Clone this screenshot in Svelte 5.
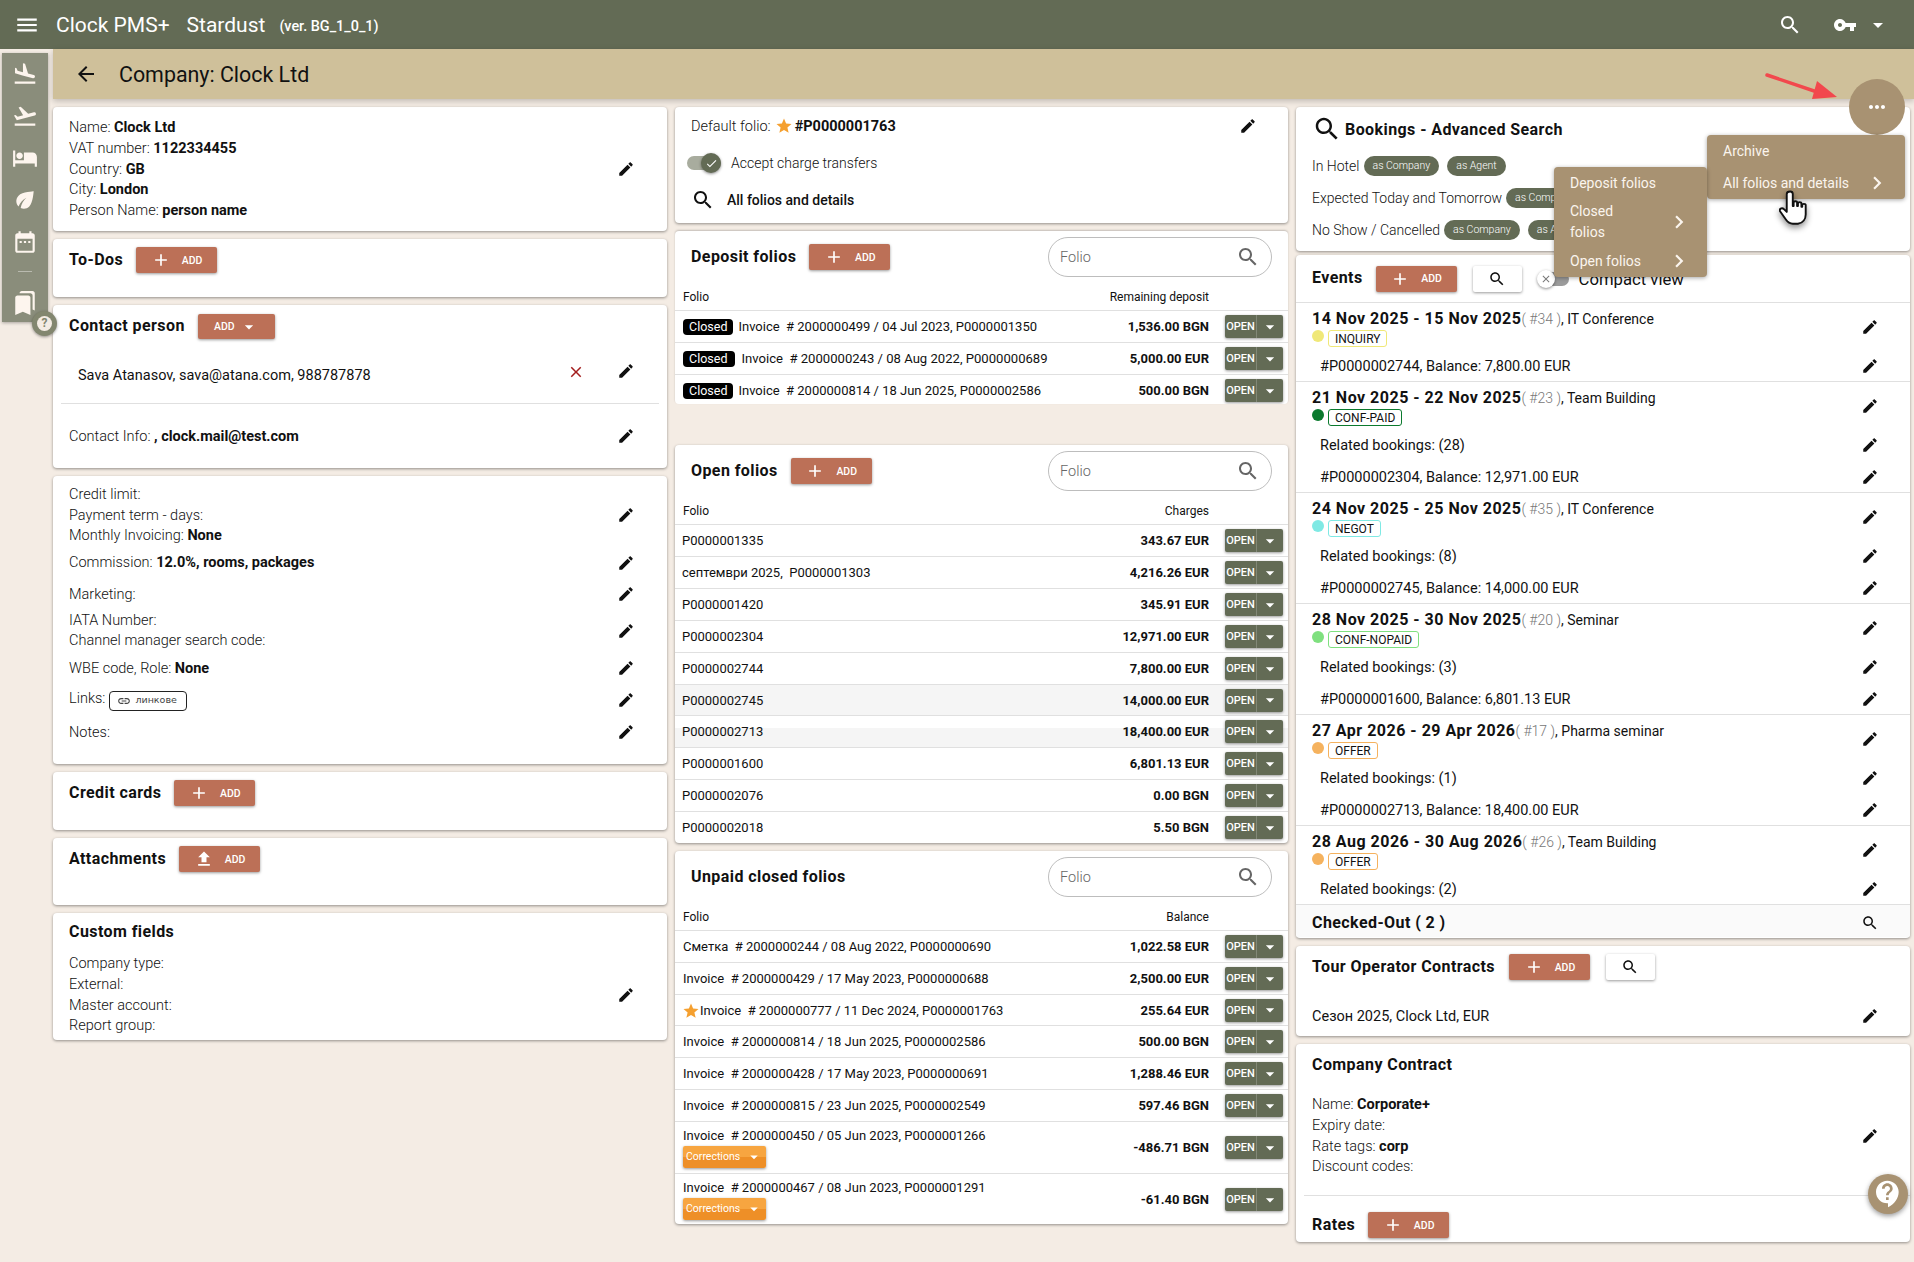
<script>
  const I = {
    land: "M2.5 19h19v2h-19zm7.18-5.73l4.35 1.16 5.31 1.42c.8.21 1.62-.26 1.84-1.06.21-.8-.26-1.62-1.06-1.84l-5.31-1.42-2.76-9.02L10.12 2v8.28L5.15 8.95l-.93-2.32-1.45-.39v5.17l1.6.43 5.31 1.43z",
    takeoff: "M2.5 19h19v2h-19zm19.57-9.36c-.21-.8-1.04-1.28-1.84-1.06L14.92 10l-6.9-6.43-1.93.51 4.14 7.17-4.97 1.33-1.97-1.54-1.45.39 1.82 3.16.77 1.33 1.6-.43 5.31-1.42 4.35-1.16L21 11.49c.81-.23 1.28-1.05 1.07-1.85z",
    hotel: "M7 13c1.66 0 3-1.34 3-3S8.66 7 7 7s-3 1.34-3 3 1.34 3 3 3zm12-6h-8v7H3V5H1v15h2v-3h18v3h2v-9c0-2.21-1.79-4-4-4z",
    eco: "M6.05 8.05c-2.73 2.73-2.73 7.15-.02 9.88 1.47-3.4 4.09-6.24 7.36-7.93-2.77 2.34-4.71 5.61-5.39 9.32 2.6 1.23 5.8.78 7.95-1.37C19.43 14.47 20 4 20 4S9.53 4.57 6.05 8.05z",
    date: "M9 11H7v2h2v-2zm4 0h-2v2h2v-2zm4 0h-2v2h2v-2zm2-7h-1V2h-2v2H8V2H6v2H5c-1.11 0-1.99.9-1.99 2L3 20c0 1.1.89 2 2 2h14c1.1 0 2-.9 2-2V6c0-1.1-.9-2-2-2zm0 16H5V9h14v11z",
    marks: "M19 18l2 1V3c0-1.1-.9-2-2-2H8.99C7.89 1 7 1.9 7 3h10c1.1 0 2 .9 2 2v13zM15 5H5c-1.1 0-2 .9-2 2v16l7-3 7 3V7c0-1.1-.9-2-2-2z",
    search: "M15.5 14h-.79l-.28-.27C15.41 12.59 16 11.11 16 9.5 16 5.91 13.09 3 9.5 3S3 5.91 3 9.5 5.91 16 9.5 16c1.61 0 3.09-.59 4.23-1.57l.27.28v.79l5 4.99L20.49 19l-4.99-5zm-6 0C7.01 14 5 11.99 5 9.5S7.01 5 9.5 5 14 7.01 14 9.5 11.99 14 9.5 14z",
    edit: "M3 17.25V21h3.75L17.81 9.94l-3.75-3.75L3 17.25zM20.71 7.04c.39-.39.39-1.02 0-1.41l-2.34-2.34c-.39-.39-1.02-.39-1.41 0l-1.83 1.83 3.75 3.75 1.83-1.83z",
    menu: "M3 18h18v-2H3v2zm0-5h18v-2H3v2zm0-7v2h18V6H3z",
    back: "M20 11H7.83l5.59-5.59L12 4l-8 8 8 8 1.41-1.41L7.83 13H20v-2z",
    key: "M12.65 10C11.83 7.67 9.61 6 7 6c-3.31 0-6 2.69-6 6s2.69 6 6 6c2.61 0 4.83-1.67 5.65-4H17v4h4v-4h2v-4H12.65zM7 14c-1.1 0-2-.9-2-2s.9-2 2-2 2 .9 2 2-.9 2-2 2z",
    add: "M19 13h-6v6h-2v-6H5v-2h6V5h2v6h6v2z",
    close: "M19 6.41L17.59 5 12 10.59 6.41 5 5 6.41 10.59 12 5 17.59 6.41 19 12 13.41 17.59 19 19 17.59 13.41 12z",
    chev: "M10 6L8.59 7.41 13.17 12l-4.58 4.59L10 18l6-6z",
    drop: "M7 10l5 5 5-5z",
    star: "M12 17.27L18.18 21l-1.64-7.03L22 9.24l-7.19-.61L12 2 9.19 8.63 2 9.24l5.46 4.73L5.82 21z",
    more: "M6 10c-1.1 0-2 .9-2 2s.9 2 2 2 2-.9 2-2-.9-2-2-2zm12 0c-1.1 0-2 .9-2 2s.9 2 2 2 2-.9 2-2-.9-2-2-2zm-6 0c-1.1 0-2 .9-2 2s.9 2 2 2 2-.9 2-2-.9-2-2-2z",
    upload: "M9 16h6v-6h4l-7-7-7 7h4zm-4 2h14v2H5z",
    link: "M3.9 12c0-1.71 1.39-3.1 3.1-3.1h4V7H7c-2.76 0-5 2.24-5 5s2.24 5 5 5h4v-1.9H7c-1.71 0-3.1-1.39-3.1-3.1zM8 13h8v-2H8v2zm9-6h-4v1.9h4c1.71 0 3.1 1.39 3.1 3.1s-1.39 3.1-3.1 3.1h-4V17h4c2.76 0 5-2.24 5-5s-2.24-5-5-5z",
    check: "M9 16.17L4.83 12l-1.42 1.41L9 19 21 7l-1.41-1.41z",
    support: "M11.5 2C6.81 2 3 5.81 3 10.5S6.81 19 11.5 19h.5v3c4.86-2.34 8-7 8-11.5C20 5.81 16.19 2 11.5 2zm1 14.5h-2v-2h2v2zm0-3.5h-2c0-3.25 3-3 3-5 0-1.1-.9-2-2-2s-2 .9-2 2h-2c0-2.21 1.79-4 4-4s4 1.79 4 4c0 2.5-3 2.75-3 5z"
  };

  const deposit = [
    ["Invoice  # 2000000499 / 04 Jul 2023, P0000001350", "1,536.00 BGN"],
    ["Invoice  # 2000000243 / 08 Aug 2022, P0000000689", "5,000.00 EUR", "wide"],
    ["Invoice  # 2000000814 / 18 Jun 2025, P0000002586", "500.00 BGN"]
  ];
  const open = [
    ["P0000001335", "343.67 EUR"],
    ["септември 2025,  P0000001303", "4,216.26 EUR"],
    ["P0000001420", "345.91 EUR"],
    ["P0000002304", "12,971.00 EUR"],
    ["P0000002744", "7,800.00 EUR"],
    ["P0000002745", "14,000.00 EUR", "hover"],
    ["P0000002713", "18,400.00 EUR", "half"],
    ["P0000001600", "6,801.13 EUR"],
    ["P0000002076", "0.00 BGN"],
    ["P0000002018", "5.50 BGN"]
  ];
  const unpaid = [
    ["Сметка  # 2000000244 / 08 Aug 2022, P0000000690", "1,022.58 EUR"],
    ["Invoice  # 2000000429 / 17 May 2023, P0000000688", "2,500.00 EUR"],
    ["Invoice  # 2000000777 / 11 Dec 2024, P0000001763", "255.64 EUR", "star"],
    ["Invoice  # 2000000814 / 18 Jun 2025, P0000002586", "500.00 BGN"],
    ["Invoice  # 2000000428 / 17 May 2023, P0000000691", "1,288.46 EUR"],
    ["Invoice  # 2000000815 / 23 Jun 2025, P0000002549", "597.46 BGN"],
    ["Invoice  # 2000000450 / 05 Jun 2023, P0000001266", "-486.71 BGN", "corr"],
    ["Invoice  # 2000000467 / 08 Jun 2023, P0000001291", "-61.40 BGN", "corr"]
  ];
  const events = [
    { d: "14 Nov 2025 - 15 Nov 2025", n: "#34", t: "IT Conference", s: "INQUIRY", c: "#f0e878", rel: null, f: "#P0000002744, Balance: 7,800.00 EUR" },
    { d: "21 Nov 2025 - 22 Nov 2025", n: "#23", t: "Team Building", s: "CONF-PAID", c: "#0b7a2e", rel: 28, f: "#P0000002304, Balance: 12,971.00 EUR" },
    { d: "24 Nov 2025 - 25 Nov 2025", n: "#35", t: "IT Conference", s: "NEGOT", c: "#7fe9e4", rel: 8, f: "#P0000002745, Balance: 14,000.00 EUR" },
    { d: "28 Nov 2025 - 30 Nov 2025", n: "#20", t: "Seminar", s: "CONF-NOPAID", c: "#7fe07f", rel: 3, f: "#P0000001600, Balance: 6,801.13 EUR" },
    { d: "27 Apr 2026 - 29 Apr 2026", n: "#17", t: "Pharma seminar", s: "OFFER", c: "#f5b25e", rel: 1, f: "#P0000002713, Balance: 18,400.00 EUR" },
    { d: "28 Aug 2026 - 30 Aug 2026", n: "#26", t: "Team Building", s: "OFFER", c: "#f5b25e", rel: 2, f: null }
  ];
</script>

{#snippet ic(d, size = 18)}
  <svg class="ic" width={size} height={size} viewBox="0 0 24 24" fill="currentColor"><path {d} /></svg>
{/snippet}

{#snippet addBtn()}
  <button class="btn add">{@render ic(I.add, 20)}<span>ADD</span></button>
{/snippet}

{#snippet searchBox()}
  <div class="searchbox"><span>Folio</span>{@render ic(I.search, 24)}</div>
{/snippet}

{#snippet openBtn()}
  <div class="open"><span class="o">OPEN</span><span class="c">{@render ic(I.drop, 20)}</span></div>
{/snippet}

{#snippet chip(label)}
  <span class="chip">{label}</span>
{/snippet}

<div class="app">
  <header class="top">
    <span class="burger">{@render ic(I.menu, 26)}</span>
    <span class="brand">Clock PMS+</span>
    <span class="brand b2">Stardust</span>
    <span class="ver">(ver. BG_1_0_1)</span>
    <span class="spacer"></span>
    <span class="t-search">{@render ic(I.search, 24)}</span>
    <span class="t-key">{@render ic(I.key, 24)}</span>
    <span class="t-drop">{@render ic(I.drop, 24)}</span>
  </header>

  <div class="shell">
    <div class="sub">
      <span class="backic">{@render ic(I.back, 24)}</span>
      <h1>Company: Clock Ltd</h1>
    </div>

    <main class="cols">
      <section class="col">
        <div class="card c1 rowcard">
          <div class="lines">
            <div>Name: <b>Clock Ltd</b></div>
            <div>VAT number: <b>1122334455</b></div>
            <div>Country: <b>GB</b></div>
            <div>City: <b>London</b></div>
            <div>Person Name: <b>person name</b></div>
          </div>
          <span class="pen">{@render ic(I.edit)}</span>
        </div>

        <div class="card c2">
          <div class="head"><h2>To-Dos</h2>{@render addBtn()}</div>
        </div>

        <div class="card c3">
          <div class="head contact-head">
            <h2>Contact person</h2>
            <button class="btn add addmenu"><span>ADD</span>{@render ic(I.drop, 20)}</button>
          </div>
          <div class="contact-row">
            <span class="sava">Sava Atanasov, sava@atana.com, 988787878</span>
            <span class="x">{@render ic(I.close, 18)}</span>
            <span class="pen">{@render ic(I.edit)}</span>
          </div>
          <div class="contact-info">
            <span class="light">Contact Info: <b>, clock.mail@test.com</b></span>
            <span class="pen">{@render ic(I.edit)}</span>
          </div>
        </div>

        <div class="card c4">
          <div class="seg s1">
            <div class="lines">
              <div>Credit limit:</div>
              <div>Payment term - days:</div>
              <div>Monthly Invoicing: <b>None</b></div>
            </div>
            <span class="pen">{@render ic(I.edit)}</span>
          </div>
          <div class="seg s2"><div class="lines"><div>Commission: <b>12.0%, rooms, packages</b></div></div><span class="pen">{@render ic(I.edit)}</span></div>
          <div class="seg s3"><div class="lines"><div>Marketing:</div></div><span class="pen">{@render ic(I.edit)}</span></div>
          <div class="seg s4">
            <div class="lines tight"><div>IATA Number:</div><div>Channel manager search code:</div></div>
            <span class="pen">{@render ic(I.edit)}</span>
          </div>
          <div class="seg s5"><div class="lines"><div>WBE code, Role: <b>None</b></div></div><span class="pen">{@render ic(I.edit)}</span></div>
          <div class="seg s6">
            <div class="lines links"><span>Links:</span><span class="linkchip">{@render ic(I.link, 14)}<i>линкове</i></span></div>
            <span class="pen">{@render ic(I.edit)}</span>
          </div>
          <div class="seg s7"><div class="lines"><div>Notes:</div></div><span class="pen">{@render ic(I.edit)}</span></div>
        </div>

        <div class="card c5">
          <div class="head"><h2>Credit cards</h2>{@render addBtn()}</div>
        </div>

        <div class="card c6">
          <div class="head">
            <h2>Attachments</h2>
            <button class="btn add">{@render ic(I.upload, 20)}<span>ADD</span></button>
          </div>
        </div>

        <div class="card c7">
          <h2 class="custom-title">Custom fields</h2>
          <div class="rowcard custom-body">
            <div class="lines">
              <div>Company type:</div>
              <div>External:</div>
              <div>Master account:</div>
              <div>Report group:</div>
            </div>
            <span class="pen">{@render ic(I.edit)}</span>
          </div>
        </div>
      </section>

      <section class="col">
        <div class="card m1">
          <div class="def">
            <span class="light">Default folio:</span>
            <span class="star">{@render ic(I.star, 18)}</span>
            <b>#P0000001763</b>
            <span class="spacer"></span>
            <span class="pen">{@render ic(I.edit)}</span>
          </div>
          <div class="accept">
            <span class="tgl"><span class="knob">{@render ic(I.check, 13)}</span></span>
            <span class="light">Accept charge transfers</span>
          </div>
          <div class="allf">
            {@render ic(I.search, 24)}
            <b>All folios and details</b>
          </div>
        </div>

        <div class="card m2">
          <div class="thead">
            <h2>Deposit folios</h2>{@render addBtn()}<span class="spacer"></span>{@render searchBox()}
          </div>
          <div class="tcols"><span>Folio</span><span>Remaining deposit</span></div>
          {#each deposit as r}
            <div class="tr">
              <span class="closed" class:wide={r[2] === "wide"}>Closed</span>
              <span class="tx" class:widetx={r[2] === "wide"}>{r[0]}</span>
              <span class="spacer"></span>
              <b class="amt">{r[1]}</b>
              {@render openBtn()}
            </div>
          {/each}
        </div>

        <div class="card m3">
          <div class="thead">
            <h2>Open folios</h2>{@render addBtn()}<span class="spacer"></span>{@render searchBox()}
          </div>
          <div class="tcols"><span>Folio</span><span>Charges</span></div>
          {#each open as r}
            <div class="tr" class:hover={r[2] === "hover"} class:half={r[2] === "half"}>
              <span class="tx">{r[0]}</span>
              <span class="spacer"></span>
              <b class="amt">{r[1]}</b>
              {@render openBtn()}
            </div>
          {/each}
        </div>

        <div class="card m4">
          <div class="thead">
            <h2>Unpaid closed folios</h2><span class="spacer"></span>{@render searchBox()}
          </div>
          <div class="tcols"><span>Folio</span><span>Balance</span></div>
          {#each unpaid as r}
            <div class="tr" class:tall={r[2] === "corr"} class:starrow={r[2] === "star"}>
              {#if r[2] === "star"}<span class="star rowstar">{@render ic(I.star, 18)}</span>{/if}
              <div class="txwrap">
                <span class="tx">{r[0]}</span>
                {#if r[2] === "corr"}
                  <span class="corr"><span>Corrections</span>{@render ic(I.drop, 18)}</span>
                {/if}
              </div>
              <span class="spacer"></span>
              <b class="amt">{r[1]}</b>
              {@render openBtn()}
            </div>
          {/each}
        </div>
      </section>

      <section class="col">
        <div class="card r1">
          <div class="adv">
            {@render ic(I.search, 30)}
            <h2>Bookings - Advanced Search</h2>
          </div>
          <div class="advrow"><span class="light">In Hotel</span>{@render chip("as Company")}{@render chip("as Agent")}</div>
          <div class="advrow"><span class="light">Expected Today and Tomorrow</span>{@render chip("as Company")}{@render chip("as Agent")}</div>
          <div class="advrow"><span class="light">No Show / Cancelled</span>{@render chip("as Company")}{@render chip("as Agent")}</div>
        </div>

        <div class="card r2">
          <div class="ev-head">
            <h2>Events</h2>
            {@render addBtn()}
            <button class="btn white">{@render ic(I.search, 18)}</button>
            <span class="tgl off"><span class="knob">{@render ic(I.close, 12)}</span></span>
            <span class="compact">Compact view</span>
          </div>
          {#each events as e, i}
            <div class="ev" class:first={i === 0} class:last={i === events.length - 1}>
              <div class="ev-main">
                <div class="ev-text">
                  <div class="ev-title"><b>{e.d}</b><span class="gray">( {e.n} )</span><span>, {e.t}</span></div>
                  <div class="ev-status">
                    <span class="dot" style="background:{e.c}"></span>
                    <span class="status" style="border-color:{e.c}">{e.s}</span>
                  </div>
                </div>
                <span class="pen">{@render ic(I.edit)}</span>
              </div>
              {#if e.rel !== null}
                <div class="ev-sub"><span>Related bookings: ({e.rel})</span><span class="pen">{@render ic(I.edit)}</span></div>
              {/if}
              {#if e.f}
                <div class="ev-sub"><span>{e.f}</span><span class="pen">{@render ic(I.edit)}</span></div>
              {/if}
            </div>
          {/each}
          <div class="checked">
            <h2>Checked-Out ( 2 )</h2>
            <span class="pen">{@render ic(I.search, 18)}</span>
          </div>
        </div>

        <div class="card r3">
          <div class="tour-head">
            <h2>Tour Operator Contracts</h2>
            {@render addBtn()}
            <button class="btn white">{@render ic(I.search, 18)}</button>
          </div>
          <div class="tour-row"><span>Сезон 2025, Clock Ltd, EUR</span><span class="pen">{@render ic(I.edit)}</span></div>
        </div>

        <div class="card r4">
          <h2 class="contract-title">Company Contract</h2>
          <div class="rowcard contract-body">
            <div class="lines">
              <div>Name: <b>Corporate+</b></div>
              <div>Expiry date:</div>
              <div>Rate tags: <b>corp</b></div>
              <div>Discount codes:</div>
            </div>
            <span class="pen">{@render ic(I.edit)}</span>
          </div>
          <div class="rates"><h2>Rates</h2>{@render addBtn()}</div>
        </div>
      </section>
    </main>
  </div>

  <aside class="side">
    <span>{@render ic(I.land, 26)}</span>
    <span>{@render ic(I.takeoff, 26)}</span>
    <span>{@render ic(I.hotel, 26)}</span>
    <span>{@render ic(I.eco, 26)}</span>
    <span>{@render ic(I.date, 26)}</span>
    <em></em>
    <span>{@render ic(I.marks, 26)}</span>
  </aside>
  <div class="sidehelp"><span>?</span></div>

  <svg class="arrow" width="76" height="32" viewBox="0 0 76 32"><path d="M2 3 L58 22" stroke="#f2484d" stroke-width="3.5" stroke-linecap="round"/><path d="M52 9 L72 25 L47 27 Z" fill="#f2484d"/></svg>
  <button class="fab">{@render ic(I.more, 24)}</button>

  <nav class="menu main-menu">
    <div class="mi">Archive</div>
    <div class="mi">All folios and details {@render ic(I.chev, 26)}</div>
  </nav>
  <nav class="menu sub-menu">
    <div class="mi">Deposit folios</div>
    <div class="mi two"><span>Closed<br />folios</span>{@render ic(I.chev, 26)}</div>
    <div class="mi">Open folios {@render ic(I.chev, 26)}</div>
  </nav>

  <svg class="hand" width="31" height="39" viewBox="0 0 36 46" preserveAspectRatio="none">
    <path d="M13 3c2 0 3 1 3 3v14l1 0v-4c0-2 4-2 4 0v4h1v-3c0-2 4-2 4 0v4h1v-2c0-2 4-2 4 0v11c0 5-3 10-9 11h-6c-4 0-6-2-8-5l-7-10c-1-2 2-5 5-2l3 3V6c0-2 2-3 4-3z" fill="#fff" stroke="#111" stroke-width="2.2" stroke-linejoin="round"/>
  </svg>

  <button class="helpfab">{@render ic(I.support, 32)}</button>
</div>

<style>
  :global(body) {
    margin: 0;
    background: #f4ece4;
  }
  .app {
    position: relative;
    width: 1914px;
    height: 1262px;
    overflow: hidden;
    background: #f4ece4;
    font-family: Roboto, "Noto Sans", sans-serif;
    font-size: 14px;
    color: #111;
  }
  .ic { display: block; flex: none; }
  .spacer { flex: 1; }
  b { font-weight: 700; }
  h1, h2 { margin: 0; }
  h2 { font-size: 16px; font-weight: 700; line-height: 20px; letter-spacing: .42px; white-space: nowrap; }
  button { font-family: inherit; border: 0; padding: 0; }

  .top {
    height: 49px;
    background: #636b55;
    color: #fff;
    display: flex;
    align-items: center;
    padding-left: 14px;
  }
  .burger { width: 28px; margin-right: 14px; }
  .brand { font-size: 21px; margin-right: 17px; }
  .ver { font-size: 14.4px; font-weight: 500; margin-top: 3px; margin-left: -3px; }
  .t-search { margin-right: 31px; }
  .t-key { margin-right: 9px; }
  .t-drop { margin-right: 24px; }

  .shell { margin-left: 53px; }
  .sub {
    height: 50px;
    background: #cfc09a;
    box-shadow: 0 2px 6px rgba(0,0,0,.22);
    display: flex;
    align-items: center;
    padding-left: 21px;
    position: relative;
    z-index: 1;
  }
  .backic { width: 24px; margin-right: 21px; }
  h1 { font-size: 21.4px; font-weight: 400; }

  .cols {
    display: grid;
    grid-template-columns: 614px 613px 614px;
    gap: 8px;
    padding-top: 8px;
  }
  .col { display: flex; flex-direction: column; gap: 8px; min-width: 0; }
  .card {
    background: #fff;
    border-radius: 4px;
    box-shadow: 0 1px 3px rgba(0,0,0,.4);
    overflow: hidden;
    flex: none;
  }
  .light { font-weight: 300; }
  .lines { font-weight: 300; flex: 1; line-height: 20.8px; font-size: 14.5px; padding-top: 2px; }
  .rowcard { display: flex; align-items: center; padding-left: 16px; }
  .pen { width: 18px; margin-right: 32px; color: #111; flex: none; }

  .head { display: flex; align-items: flex-start; padding: 8px 0 0 16px; gap: 13px; }
  .head h2 { margin-top: 3px; }

  .btn {
    display: inline-flex;
    align-items: center;
    justify-content: center;
    height: 26px;
    border-radius: 2px;
    box-shadow: 0 1px 3px rgba(0,0,0,.4);
    flex: none;
  }
  .add { width: 81px; background: #bc7057; color: #fff; gap: 11px; font-size: 10.5px; font-weight: 500; }
  .addmenu { width: 77px; height: 25px; gap: 4px; }
  .white { width: 49px; background: #fff; color: #111; }

  .c1 { height: 124px; }
  .c2 { height: 58px; }
  .c3 { height: 163px; }
  .contact-head { padding-top: 9px; gap: 13px; }
  .contact-head h2 { margin-top: 2px; }
  .contact-row {
    margin: 0 8px;
    height: 65px;
    padding: 21px 0 0 17px;
    box-sizing: border-box;
    display: flex;
    align-items: flex-start;
    border-bottom: 1px solid #e0e0e0;
    position: relative;
    font-size: 14.5px;
  }
  .contact-row .sava { flex: 1; padding-top: 6px; line-height: 20px; }
  .contact-row .x { color: #a31d1d; margin-right: 32px; margin-top: 3px; }
  .contact-row .pen { margin-right: 24px; margin-top: 2px; }
  .contact-info { display: flex; align-items: center; justify-content: space-between; padding: 23px 0 0 16px; font-size: 14.5px; }

  .c4 { height: 288px; padding-top: 7px; box-sizing: border-box; }
  .seg { display: flex; align-items: center; padding-left: 16px; }
  .s1 { height: 64px; }
  .s2 { height: 31px; }
  .s3 { height: 32px; }
  .s4 { height: 42px; }
  .s5 { height: 32px; }
  .s6 { height: 32px; }
  .s7 { height: 32px; }
  .tight { line-height: 20px; padding-top: 0; }
  .links { display: flex; align-items: center; gap: 4px; padding-top: 0; margin-top: -2px; }
  .linkchip {
    display: inline-flex;
    align-items: center;
    gap: 4px;
    height: 18px;
    padding: 0 9px 0 7px;
    border: 1px solid #222;
    border-radius: 4px;
    font-size: 9.5px;
    font-family: "DejaVu Sans", sans-serif;
    font-weight: 400;
    color: #444;
    margin-top: 3px;
  }
  .linkchip i { font-style: normal; }

  .c5 { height: 58px; }
  .c6 { height: 67px; }
  .c7 { height: 127px; }
  .custom-title { padding: 9px 0 0 16px; }
  .custom-body { margin-top: 10px; }

  .m1 { height: 116px; padding-left: 16px; position: relative; }
  .def { display: flex; align-items: center; height: 20px; margin-top: 9px; gap: 2px; font-size: 14.5px; }
  .def .star { margin-left: 2px; }
  .def .pen { margin-right: 31px; }
  .star { color: #f5a030; }
  .accept { display: flex; align-items: center; height: 20px; margin-top: 17px; gap: 10px; margin-left: -4px; }
  .tgl {
    width: 34px;
    height: 14px;
    border-radius: 7px;
    background: #a8ac9e;
    position: relative;
    display: block;
    flex: none;
  }
  .knob {
    position: absolute;
    right: 0;
    top: -3px;
    width: 20px;
    height: 20px;
    border-radius: 50%;
    background: #636b55;
    color: #fff;
    display: flex;
    align-items: center;
    justify-content: center;
    box-shadow: 0 1px 3px rgba(0,0,0,.45);
  }
  .allf { display: flex; align-items: center; gap: 12px; margin-top: 15px; height: 24px; }
  .allf b { font-weight: 500; }

  .thead { display: flex; align-items: center; height: 40px; padding: 6px 16px 0 16px; gap: 13px; }
  .tcols {
    display: flex;
    justify-content: space-between;
    padding: 6px 79px 0 8px;
    height: 33px;
    align-items: center;
    font-size: 12px;
    font-weight: 400;
    box-sizing: border-box;
  }
  .tr {
    display: flex;
    align-items: center;
    height: 32px;
    box-sizing: border-box;
    border-top: 1px solid #e0e0e0;
    padding: 0 5px 0 8px;
    font-size: 13px;
    font-weight: 400;
  }
  .tr.hover { background: #f5f5f5; height: 31px; }
  .tr.half { background: linear-gradient(#fff 12px, #f5f5f5 12px); }
  .tr.starrow { height: 31px; }
  .tr.tall { height: 52px; }
  .tx { white-space: pre; margin-left: -1px; }
  .tx.widetx { font-size: 13.1px; margin-left: 0; }
  .amt { margin-right: 16px; font-size: 13px; font-weight: 700; }
  .closed {
    background: #000;
    color: #fff;
    border-radius: 4px;
    height: 16px;
    line-height: 16px;
    padding: 0 6px;
    font-size: 12.5px;
    margin-right: 6px;
  }
  .closed.wide { padding-right: 8px; }
  .open {
    width: 58px;
    height: 23px;
    display: flex;
    background: #636b55;
    border-radius: 2px;
    color: #fff;
    font-size: 11px;
    font-weight: 500;
    box-shadow: 0 1px 3px rgba(0,0,0,.4);
    flex: none;
  }
  .open .o { width: 32px; box-sizing: border-box; line-height: 23px; text-align: center; border-right: 1px solid rgba(255,255,255,.2); }
  .open .c { flex: 1; display: flex; align-items: center; justify-content: center; }
  .searchbox {
    width: 224px;
    height: 40px;
    box-sizing: border-box;
    border: 1px solid #bdbdbd;
    border-radius: 20px;
    display: flex;
    align-items: center;
    justify-content: space-between;
    padding: 0 11px;
    color: #666;
    font-size: 14.5px;
    font-weight: 300;
    flex: none;
  }
  .searchbox .ic { color: #666; }

  .m2 { height: 173px; box-shadow: 0 -1px 2px rgba(0,0,0,.2); }
  .m3 { height: 398px; margin-top: 33px; }
  .m4 { height: 373px; }
  .rowstar { margin-left: -1px; margin-right: 0; margin-top: 2px; }
  .txwrap { display: flex; flex-direction: column; gap: 3px; align-items: flex-start; }
  .txwrap .tx { margin-left: 0; }
  .corr {
    width: 83px;
    height: 22px;
    box-sizing: border-box;
    border-radius: 2px;
    background: linear-gradient(#f7a540 50%, #ee8f27 50%);
    color: #fff;
    font-size: 10.5px;
    display: flex;
    align-items: center;
    justify-content: space-between;
    padding: 0 3px;
    box-shadow: 0 1px 3px rgba(0,0,0,.4);
  }

  .r1 { height: 144px; padding-left: 16px; margin-bottom: -4px; }
  .adv { display: flex; align-items: center; gap: 3px; height: 30px; margin: 7px 0 0 0; }
  .adv h2 { margin-top: 2px; }
  .advrow { display: flex; align-items: center; height: 20px; margin-top: 12px; gap: 4px; white-space: nowrap; }
  .chip {
    height: 20px;
    line-height: 20px;
    border-radius: 10px;
    background: #636b55;
    color: #fff;
    font-size: 10.5px;
    font-weight: 300;
    padding: 0 9px;
    margin-right: 4px;
  }

  .r2 { height: 683px; }
  .ev-head { height: 48px; display: flex; align-items: center; padding: 0 0 2px 16px; gap: 0; border-bottom: 1px solid #e0e0e0; box-sizing: border-box; }
  .ev-head h2 { margin-right: 13px; }
  .ev-head .add, .ev-head .white { margin-top: 2px; }
  .ev-head .white { margin-left: 16px; margin-right: 18px; }
  .tgl.off { background: #9b9b9b; width: 29px; margin-top: 3px; }
  .tgl.off .knob { left: -3px; right: auto; width: 18px; height: 18px; top: -2px; background: #fff; color: #777; }
  .compact { font-size: 16.7px; margin-left: 10px; margin-top: 4px; }

  .ev { height: 111px; border-bottom: 1px solid #e0e0e0; box-sizing: border-box; padding-left: 16px; font-size: 14.5px; }
  .ev.first { height: 79px; }
  .ev.last { height: 79px; }
  .ev-main { display: flex; align-items: center; height: 47px; }
  .ev-main .pen { margin-right: 31px; }
  .ev-text { flex: 1; }
  .ev-title { font-size: 14px; display: flex; align-items: baseline; height: 21px; line-height: 21px; margin-top: 1px; }
  .ev-title b { font-size: 16px; font-weight: 700; letter-spacing: .5px; }
  .gray { color: #777; font-weight: 300; white-space: pre; }
  .ev-status { display: flex; align-items: center; gap: 4px; height: 17px; margin-top: 1px; }
  .dot { width: 12px; height: 12px; border-radius: 50%; margin-top: -5px; }
  .status { border: 1px solid; border-radius: 3px; font-size: 12px; height: 17px; line-height: 16px; padding: 0 6px; box-sizing: border-box; }
  .ev-sub { display: flex; align-items: center; justify-content: space-between; height: 32px; padding-left: 8px; }
  .ev-sub .pen { margin-right: 31px; }
  .checked { background: #fafafa; height: 33px; display: flex; align-items: center; justify-content: space-between; padding: 3px 0 0 16px; box-sizing: border-box; margin-top: -1px; border-top: 1px solid #e0e0e0; }
  .checked .pen { margin-right: 31px; }

  .r3 { height: 90px; }
  .tour-head { display: flex; align-items: center; gap: 14px; padding: 8px 0 0 16px; }
  .tour-head .white { margin-left: 2px; }
  .tour-row { display: flex; align-items: center; justify-content: space-between; padding: 27px 0 0 16px; font-size: 14.5px; }
  .tour-row .pen { margin-right: 31px; }

  .r4 { height: 198px; }
  .contract-title { padding: 11px 0 0 16px; }
  .contract-body { padding-left: 16px; margin-top: 19px; height: 83px; }
  .contract-body .pen { margin-right: 31px; }
  .rates { display: flex; align-items: center; gap: 13px; margin: 18px 0 0 8px; padding: 16px 0 0 8px; border-top: 1px solid #e0e0e0; }

  .side {
    position: absolute;
    left: 2px;
    top: 53px;
    width: 46px;
    height: 269px;
    background: #8a8d7b;
    box-shadow: 0 1px 3px rgba(0,0,0,.3);
    color: #fdf5ee;
    display: flex;
    flex-direction: column;
    align-items: center;
    padding-top: 8px;
    box-sizing: border-box;
    gap: 15.6px;
    z-index: 3;
  }
  .side span { height: 26.5px; }
  .side em { width: 14px; height: 1px; background: rgba(255,255,255,.4); margin: 0 0 2px; }
  .sidehelp {
    position: absolute;
    left: 32px;
    top: 311px;
    width: 25px;
    height: 25px;
    border-radius: 50%;
    background: #82866f;
    display: flex;
    align-items: center;
    justify-content: center;
    z-index: 4;
    box-shadow: 0 1px 3px rgba(0,0,0,.4);
  }
  .sidehelp span {
    width: 15px;
    height: 15px;
    border-radius: 50%;
    background: #f4ece4;
    color: #82866f;
    font-size: 12px;
    font-weight: 700;
    line-height: 15px;
    text-align: center;
  }
  .arrow { position: absolute; left: 1765px; top: 72px; z-index: 5; }
  .fab {
    position: absolute;
    left: 1849px;
    top: 79px;
    width: 56px;
    height: 56px;
    border-radius: 50%;
    background: #a89272;
    color: #fff;
    display: flex;
    align-items: center;
    justify-content: center;
    z-index: 5;
  }
  .menu {
    position: absolute;
    background: #a89272;
    color: #fbf5ee;
    border-radius: 4px;
    box-shadow: 0 1px 4px rgba(0,0,0,.35);
    font-weight: 400;
    z-index: 6;
    font-size: 14px;
  }
  .main-menu { left: 1707px; top: 135px; width: 198px; height: 64px; }
  .sub-menu { left: 1554px; top: 167px; width: 153px; height: 110px; }
  .mi { height: 32px; display: flex; align-items: center; justify-content: space-between; padding: 0 15px 0 16px; }
  .mi.two { height: 45px; line-height: 21px; }
  .sub-menu .mi:last-child { height: 33px; }
  .hand { position: absolute; left: 1779px; top: 189px; z-index: 7; filter: drop-shadow(0 3px 3px rgba(0,0,0,.45)); }
  .helpfab {
    position: absolute;
    left: 1868px;
    top: 1174px;
    width: 40px;
    height: 40px;
    border-radius: 50%;
    background: #a89272;
    color: #fff;
    display: flex;
    align-items: center;
    justify-content: center;
    box-shadow: 0 2px 5px rgba(0,0,0,.4);
    z-index: 5;
  }
</style>
